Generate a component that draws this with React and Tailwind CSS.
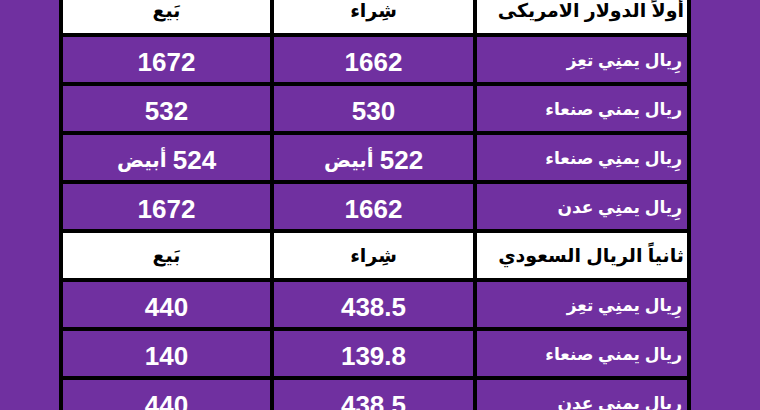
const WHITE = "أبيض"

const usd = [
  { label: "رِيال يمنِي تعِز", buy: "1662", sell: "1672" },
  { label: "ريال يمني صنعاء", buy: "530", sell: "532" },
  { label: "رِيال يمنِي صنعاء", buy: "522", sell: "524", note: WHITE },
  { label: "رِيال يمنِي عدن", buy: "1662", sell: "1672" },
]

const sar = [
  { label: "رِيال يمنِي تعِز", buy: "438.5", sell: "440" },
  { label: "ريال يمني صنعاء", buy: "139.8", sell: "140" },
  { label: "ريال يمني عدن", buy: "438.5", sell: "440" },
]

function HeadRow({ title }) {
  return (
    <div className="grid grid-cols-[210px_199px_207px] gap-[4px]">
      <div className="flex h-[45px] items-center whitespace-nowrap bg-white pr-[3px] pt-[2px] text-[19px] font-bold text-black">
        {title}
      </div>
      <div className="flex h-[45px] items-center justify-center bg-white pt-[2px] text-[19px] font-bold text-black">
        شِراء
      </div>
      <div className="flex h-[45px] items-center justify-center bg-white pt-[2px] text-[19px] font-bold text-black">
        بَيع
      </div>
    </div>
  )
}

// number sits on the right, the word on its left
function Value({ num, note }) {
  return (
    <div dir="ltr" className="flex h-[45px] items-center justify-center gap-[6px] bg-[#7030a0] pt-[5px] font-bold text-white">
      {note && <span className="text-[20px]">{note}</span>}
      <span className="text-[26px]">{num}</span>
    </div>
  )
}

function RateRow({ row }) {
  return (
    <div className="grid grid-cols-[210px_199px_207px] gap-[4px]">
      <div className="flex h-[45px] items-center whitespace-nowrap bg-[#7030a0] pr-[5px] pt-[3px] text-[17px] font-bold text-white">
        {row.label}
      </div>
      <Value num={row.buy} note={row.note} />
      <Value num={row.sell} note={row.note} />
    </div>
  )
}

export default function App() {
  return (
    <div
      className="h-[410px] w-[760px] overflow-hidden bg-[#7030a0]"
      style={{ fontFamily: '"Liberation Sans", "DejaVu Sans", sans-serif' }}
    >
      <div dir="rtl" className="ml-[59px] mt-[-16px] flex w-[632px] flex-col gap-[4px] border-4 border-black bg-black">
        <HeadRow title="أولاً الدولار الامريكى" />
        {usd.map((r, i) => (
          <RateRow key={"u" + i} row={r} />
        ))}
        <HeadRow title="ثانياً الريال السعودي" />
        {sar.map((r, i) => (
          <RateRow key={"s" + i} row={r} />
        ))}
      </div>
    </div>
  )
}
